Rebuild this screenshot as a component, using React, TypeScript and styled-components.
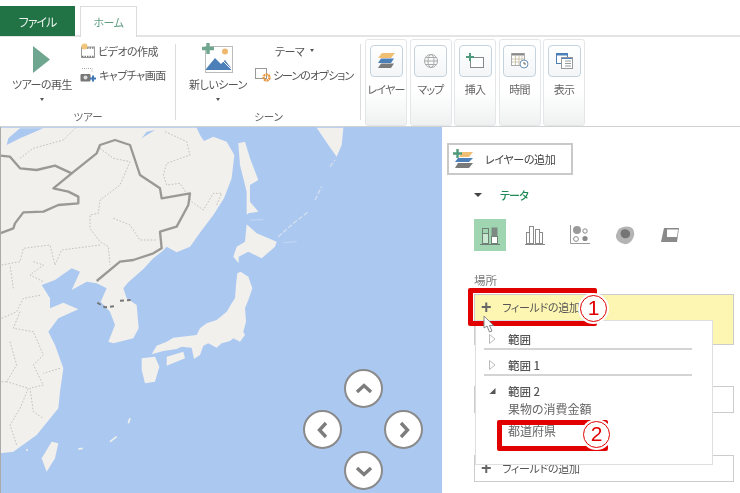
import React from "react";
import styled, { createGlobalStyle } from "styled-components";

const Global = createGlobalStyle`
  html, body { margin: 0; padding: 0; background: #fff; }
  #root { width: 740px; height: 493px; overflow: hidden; }
  * { box-sizing: border-box; }
`;

const Page = styled.div`
  width: 740px;
  height: 493px;
  display: flex;
  flex-direction: column;
  overflow: hidden;
  font-family: "Noto Sans CJK JP", "Noto Sans", sans-serif;
  font-feature-settings: "palt";
  color: #555;
  background: #fff;
  filter: blur(0.3px);
`;

const Tabs = styled.div`
  height: 37px;
  flex: none;
  padding-top: 6px;
  display: flex;
  gap: 5px;
  border-bottom: 2px solid #e4e4e4;
`;
const FileTab = styled.div`
  width: 75px;
  height: 30px;
  background: #217346;
  color: #e8f2ec;
  font-size: 12px;
  letter-spacing: -1px;
  display: flex;
  align-items: center;
  justify-content: center;
`;
const HomeTab = styled.div`
  width: 57px;
  height: 31px;
  background: #fff;
  border: 1px solid #dcdcdc;
  border-bottom: none;
  color: #5f9c82;
  font-size: 11px;
  letter-spacing: -0.5px;
  display: flex;
  align-items: center;
  justify-content: center;
`;

const Ribbon = styled.div`
  height: 90px;
  flex: none;
  display: flex;
  border-bottom: 1px solid #d2d2d2;
`;
const Group = styled.div<{ $w: number; $sep?: boolean }>`
  width: ${(p) => p.$w}px;
  height: 89px;
  flex: none;
  display: flex;
  flex-direction: column;
  align-items: stretch;
  position: relative;
  ${(p) => p.$sep && `&::after{content:"";position:absolute;right:0;top:7px;height:76px;width:1px;background:#dcdcdc;}`}
`;
const GroupBody = styled.div`
  height: 72px;
  display: flex;
  flex: none;
`;
const GroupLabel = styled.div`
  height: 17px;
  text-align: center;
  font-size: 10.5px;
  line-height: 16px;
  color: #666;
`;
const LargeButton = styled.div<{ $w: number; $ml: number }>`
  width: ${(p) => p.$w}px;
  margin-left: ${(p) => p.$ml}px;
  flex: none;
  display: flex;
  flex-direction: column;
  align-items: center;
  padding-top: 6px;
  font-size: 11px;
  letter-spacing: -0.5px;
  white-space: nowrap;
`;
const LargeIcon = styled.div`
  height: 32px;
  display: flex;
  align-items: center;
  justify-content: center;
`;
const LargeText = styled.div`
  height: 18px;
  line-height: 18px;
`;
const Caret = styled.div`
  width: 0;
  height: 0;
  margin-top: 5px;
  border-left: 2.5px solid transparent;
  border-right: 2.5px solid transparent;
  border-top: 3px solid #555;
`;
const InlineCaret = styled(Caret)`
  margin-top: 0;
`;
const SmallStack = styled.div<{ $ml: number }>`
  margin-left: ${(p) => p.$ml}px;
  padding-top: 5px;
  display: flex;
  flex-direction: column;
  gap: 7px;
`;
const SmallButton = styled.div<{ $tight?: boolean }>`
  height: 17px;
  display: flex;
  align-items: center;
  gap: 2px;
  font-size: 11px;
  letter-spacing: ${(p) => (p.$tight ? -1 : -0.5)}px;
  white-space: nowrap;
`;
const ThemeButton = styled(SmallButton)`
  padding-left: 20px;
  gap: 6px;
`;

const Cards = styled.div`
  display: flex;
  gap: 2.5px;
  padding: 2px 0 0 4px;
`;
const Card = styled.div`
  width: 42px;
  height: 87px;
  border: 1px solid #e4e7ea;
  border-radius: 3px;
  padding-top: 5px;
  background: linear-gradient(#fff 60%, #eff1f1);
  display: flex;
  flex-direction: column;
  align-items: center;
`;
const CardIcon = styled.div`
  width: 33px;
  height: 32px;
  border: 1px solid #c5d3df;
  border-radius: 4px;
  background: linear-gradient(#fff, #f3f5f7);
  display: flex;
  align-items: center;
  justify-content: center;
`;
const CardText = styled.div`
  margin-top: 4px;
  font-size: 11px;
  letter-spacing: -0.8px;
  line-height: 16px;
  color: #666;
  white-space: nowrap;
`;

const Body = styled.div`
  flex: 1;
  display: flex;
  min-height: 0;
`;
const MapPane = styled.div`
  width: 442px;
  height: 366px;
  flex: none;
  position: relative;
  background: #abc8f0;
  border-left: 1px solid #aaa;
  overflow: hidden;
`;
const MapSvg = styled.svg`
  display: block;
  width: 441px;
  height: 366px;
`;
const NavPad = styled.div`
  position: absolute;
  left: 302px;
  top: 242px;
  display: grid;
  grid-template-columns: repeat(3, 39px);
  grid-template-rows: repeat(3, 41px);
`;
const NavButton = styled.div<{ $c: number; $r: number }>`
  grid-column: ${(p) => p.$c};
  grid-row: ${(p) => p.$r};
  width: 39px;
  height: 39px;
  border-radius: 50%;
  background: #fff;
  border: 2px solid #8a8a8a;
  display: flex;
  align-items: center;
  justify-content: center;
  margin-left: ${(p) => (p.$c === 3 ? 3 : p.$c === 1 ? 0 : 2)}px;
`;

const Panel = styled.div`
  flex: 1;
  position: relative;
  overflow: hidden;
  padding: 16px 6px 0 5px;
`;
const AddLayer = styled.div`
  width: 126px;
  height: 32px;
  border: 2px solid #c9c9c9;
  display: flex;
  align-items: center;
  padding-left: 4px;
  gap: 11px;
  font-size: 11px;
  letter-spacing: -0.35px;
  color: #444;
`;
const Section = styled.div`
  padding-left: 27px;
  display: flex;
  flex-direction: column;
`;
const DataHead = styled.div`
  margin-top: 12px;
  height: 16px;
  display: flex;
  align-items: center;
  gap: 18px;
  font-size: 11px;
  letter-spacing: -0.8px;
  font-weight: 500;
  color: #1f8a55;
`;
const DownTri = styled.div`
  width: 0;
  height: 0;
  border-left: 4.5px solid transparent;
  border-right: 4.5px solid transparent;
  border-top: 4.5px solid #444;
`;
const ChartRow = styled.div`
  margin-top: 16px;
  display: flex;
  gap: 13px;
`;
const ChartBtn = styled.div<{ $on?: boolean }>`
  width: 32px;
  height: 32px;
  background: ${(p) => (p.$on ? "#a0d5b2" : "transparent")};
  display: flex;
  align-items: center;
  justify-content: center;
`;
const FieldLabel = styled.div`
  margin-top: 21px;
  font-size: 11.5px;
  line-height: 17px;
  color: #777;
`;
const Field = styled.div<{ $h: number; $mt: number; $on?: boolean }>`
  width: 260px;
  height: ${(p) => p.$h}px;
  margin-top: ${(p) => p.$mt}px;
  flex: none;
  border: 1px solid #ccc;
  background: ${(p) => (p.$on ? "#fdf6b2" : "#fff")};
  display: flex;
  align-items: flex-start;
  padding: 4px 0 0 6px;
  gap: 11px;
  font-size: 11px;
  letter-spacing: -0.3px;
  line-height: 17px;
  color: #555;
`;
const Plus = styled.span`
  font-size: 18px;
  line-height: 17px;
  font-weight: 700;
  color: #666;
  font-family: "Liberation Sans", sans-serif;
`;
const Dropdown = styled.div`
  position: absolute;
  left: 33px;
  top: 193px;
  width: 238px;
  height: 145px;
  background: #fff;
  border: 1px solid #dedede;
  padding: 9px 20px 0 8px;
  font-size: 11.5px;
  color: #555;
`;
const TreeRow = styled.div<{ $line?: boolean }>`
  height: ${(p) => (p.$line ? 20 : 18)}px;
  display: flex;
  align-items: center;
  gap: 12px;
  padding-left: 5px;
  font-weight: 500;
  line-height: 17px;
  color: #555;
  border-bottom: ${(p) => (p.$line ? "2px solid #d4d4d4" : "none")};
  margin-bottom: ${(p) => (p.$line ? 6 : 0)}px;
`;
const TreeLeaf = styled.div<{ $mt: number }>`
  margin: ${(p) => p.$mt}px 0 0 24px;
  line-height: 17px;
  color: #666;
  font-size: 12px;
`;
const RedBox = styled.div<{ $l: number; $t: number; $w: number; $h: number }>`
  position: absolute;
  left: ${(p) => p.$l}px;
  top: ${(p) => p.$t}px;
  width: ${(p) => p.$w}px;
  height: ${(p) => p.$h}px;
  border: 5px solid #e00000;
  border-radius: 2px;
`;
const Badge = styled.div<{ $l: number; $t: number }>`
  position: absolute;
  left: ${(p) => p.$l}px;
  top: ${(p) => p.$t}px;
  width: 31px;
  height: 31px;
  border-radius: 50%;
  background: #fff;
  display: flex;
  align-items: center;
  justify-content: center;
`;
const BadgeInner = styled.div`
  width: 27px;
  height: 27px;
  border-radius: 50%;
  border: 1.5px solid #e00000;
  color: #e00000;
  font-size: 21px;
  line-height: 24px;
  text-align: center;
  font-family: "Liberation Sans", sans-serif;
`;
const Cursor = styled.svg`
  position: absolute;
  left: 41px;
  top: 188px;
`;

const mainland =
  "M590 8 L600 30 L612 48 L640 35 L680 50 L703 90 L695 160 L672 220 L640 270 L602 320 L570 365 L530 382 L500 365 L488 378 L460 400 L430 432 L385 472 L370 490 L380 520 L410 540 L416 610 L400 640 L340 655 L325 650 L345 600 L330 560 L302 530 L320 490 L290 475 L260 470 L215 495 L240 440 L215 430 L165 465 L125 480 L150 520 L150 550 L190 533 L235 553 L175 580 L145 620 L165 660 L190 730 L180 800 L175 850 L110 930 L40 980 L0 985 L0 8 Z";
const honshu =
  "M712 445 L722 440 L745 455 L757 490 L745 525 L735 550 L738 590 L730 620 L735 630 L720 650 L700 640 L690 648 L665 655 L650 668 L625 655 L610 662 L600 690 L582 702 L575 668 L545 665 L530 672 L490 678 L455 688 L470 662 L500 650 L520 638 L590 630 L600 610 L620 595 L650 585 L680 560 L695 535 L705 520 L708 480 Z";

const MapArt = () => (
  <MapSvg viewBox="3 6 1323 1098">
    <defs>
      <filter id="soft"><feGaussianBlur stdDeviation="1.4" /></filter>
    </defs>
    <g filter="url(#soft)">
      <path d={mainland} fill="#f1f0ed" />
      <path d="M715 55 L735 50 L750 100 L775 165 L750 180 L750 230 L775 260 L745 265 L740 270 L740 200 L720 120 Z" fill="#f1f0ed" />
      <path d="M950 8 L1030 8 L1025 60 L1010 95 L985 60 Z" fill="#f1f0ed" />
      <path d="M740 298 L770 325 L830 350 L825 365 L785 400 L745 380 L716 395 L716 415 L700 395 L710 365 L735 350 Z" fill="#f1f0ed" />
      <path d={honshu} fill="#f1f0ed" />
      <path d="M425 700 L465 695 L478 725 L465 770 L435 775 L425 735 Z" fill="#f1f0ed" />
      <path d="M500 695 L550 680 L555 700 L500 722 Z" fill="#f1f0ed" />
      <path d="M155 950 L175 955 L165 1000 L140 1040 L125 1000 Z" fill="#f1f0ed" />
      <path d="M835 335 L880 295 L925 260 M945 225 L965 185 M990 125 L1005 105" stroke="#d4dfee" strokeWidth="4" strokeDasharray="14 6" fill="none" />
      <path d="M750 285 L790 284 M850 353 L890 350" stroke="#c4d7f2" strokeWidth="3" fill="none" />
      <path d="M385 895 L390 880 M330 950 L350 935 M235 972 L248 970 M78 975 L84 975" stroke="#f1f0ed" strokeWidth="5" fill="none" />
      <path d="M20 60 L60 40 L130 10 L60 10 L25 40 Z M425 40 L465 15 L440 20 Z" fill="#abc8f0" />
      <g fill="none" stroke="#b9b8b4" strokeWidth="2.5" strokeDasharray="5 5">
        <path d="M60 100 L100 70 L190 45 L225 10 M300 70 L340 100 L390 110 L360 180 L300 225 L295 265 L270 270 L270 310 L300 350 L325 365 L330 420" />
        <path d="M340 280 L390 300 L420 345 L470 345 M495 20 L560 50 L570 90 L500 115 L490 150 L500 180 L540 175 L575 230 L610 255 L640 205 L665 205 L650 240" />
        <path d="M5 420 L60 410 L70 370 L150 360 L165 420 L185 375 L300 360 M100 410 L130 420 L90 450 L130 470" />
        <path d="M5 580 L50 560 L70 520 L125 510 M40 490 L30 420 M60 560 L40 610 L100 620 L130 690 L100 720 L130 780 L90 790 L100 860 L130 880 M30 650 L50 720 L20 770 L85 790 L60 850 L30 900 L50 960 M5 770 L20 770 M180 730 L130 745" />
      </g>
      <g fill="none" stroke="#9a9996" strokeWidth="7" strokeLinejoin="round">
        <path d="M0 92 L30 95 L60 130 L110 135 L165 122 L215 145 L290 85 L300 60 L345 45 L390 60 L420 150 L480 190 L485 220 L570 205 L565 240 L530 305 L480 320 L485 370 L460 385 L400 405 L360 410 L290 468" />
        <path d="M215 145 L160 190 L205 200 L235 215 L235 235 L175 240 L130 260 L70 262 L45 295 L40 310 L0 325" />
      </g>
      <path d="M292 533 L315 547 L350 543 M360 527 L392 525" fill="none" stroke="#777" strokeWidth="6" strokeDasharray="12 9" />
    </g>
  </MapSvg>
);

const Chev = ({ d }: { d: string }) => (
  <svg width="20" height="20" viewBox="0 0 20 20">
    <path d={d} fill="none" stroke="#7d7d7d" strokeWidth="3.4" />
  </svg>
);

const PlayIcon = () => (
  <svg width="18" height="27" viewBox="0 0 18 27"><path d="M0 0 L17 13.5 L0 27 Z" fill="#6fa68f" /></svg>
);
const VideoIcon = () => (
  <svg width="16" height="16" viewBox="0 0 16 16">
    <rect x="1.5" y="4" width="13" height="10.5" fill="#fff" stroke="#999" />
    <path d="M2 13.5 h12 M2 5 h12" stroke="#777" strokeWidth="1.4" strokeDasharray="1.5 1" />
    <circle cx="4.5" cy="3.5" r="3" fill="#f3c57c" />
  </svg>
);
const CaptureIcon = () => (
  <svg width="17" height="16" viewBox="0 0 17 16">
    <path d="M2 1.5 h10 v4" fill="none" stroke="#aaa" strokeDasharray="1 1" />
    <rect x="0.5" y="7" width="10" height="7.5" rx="1" fill="#777" />
    <circle cx="5.5" cy="10.5" r="2" fill="#ddd" />
    <path d="M13 8.5 v6 M10 11.5 h6" stroke="#3f78b8" strokeWidth="2" />
  </svg>
);
const SceneIcon = () => (
  <svg width="32" height="32" viewBox="0 0 32 32">
    <rect x="3.5" y="3.5" width="27" height="26" fill="#fff" stroke="#bbb" />
    <path d="M4 26 L13 15 L19 21 L23 17 L29 25 L29 27 L4 27 Z" fill="#4d7fb8" />
    <path d="M19 16 L29 26" stroke="#fff" strokeWidth="1" />
    <circle cx="23" cy="8.5" r="3" fill="#eeb86e" />
    <path d="M6 0 v11 M0 5.5 h12" stroke="#6fa68f" strokeWidth="3.4" />
  </svg>
);
const OptionsIcon = () => (
  <svg width="16" height="15" viewBox="0 0 16 15">
    <rect x="0.5" y="1.5" width="11" height="10" fill="#fff" stroke="#999" />
    <circle cx="11.5" cy="10.5" r="3" fill="none" stroke="#e8963c" strokeWidth="2.4" strokeDasharray="2 0.6" />
  </svg>
);
const LayersIcon = () => (
  <svg width="20" height="18" viewBox="0 0 20 18">
    <path d="M6 1 H19 L15 6 H2 Z" fill="#f0bf74" />
    <path d="M5 6.5 H18 L15 11 H2 Z" fill="#4d7fb8" />
    <path d="M5 11.5 H18 L15 16 H2 Z" fill="#7a7a7a" />
  </svg>
);
const GlobeIcon = () => (
  <svg width="16" height="16" viewBox="0 0 16 16" fill="none" stroke="#aaa">
    <circle cx="8" cy="8" r="6.5" />
    <ellipse cx="8" cy="8" rx="3" ry="6.5" />
    <path d="M1.5 8 h13 M2.5 4.5 h11 M2.5 11.5 h11" />
  </svg>
);
const InsertIcon = () => (
  <svg width="18" height="16" viewBox="0 0 18 16">
    <rect x="4.5" y="4.5" width="13" height="10" fill="#fff" stroke="#888" />
    <path d="M4 0 v8 M0 4 h8" stroke="#4f9a7a" strokeWidth="2" />
  </svg>
);
const TimeIcon = () => (
  <svg width="18" height="16" viewBox="0 0 18 16">
    <rect x="0.5" y="0.5" width="13" height="12" fill="#fff" stroke="#aaa" />
    <path d="M1 1.5 h12" stroke="#888" strokeWidth="2" />
    <path d="M1 6 h12 M1 9 h12 M4.5 3 v9 M8 3 v9 M11 3 v9" stroke="#cfc6ae" />
    <circle cx="13" cy="11" r="4" fill="#fff" stroke="#6f93b8" />
    <path d="M13 9 v2 h2" stroke="#666" fill="none" />
  </svg>
);
const ViewIcon = () => (
  <svg width="17" height="16" viewBox="0 0 17 16">
    <rect x="0.5" y="0.5" width="11" height="10" fill="#fff" stroke="#4d7fb8" />
    <path d="M1 1.5 h10" stroke="#4d7fb8" strokeWidth="2" />
    <rect x="5.5" y="4.5" width="11" height="11" fill="#fff" stroke="#999" />
    <path d="M6 5.5 h10" stroke="#4d7fb8" />
    <path d="M9 8 h6 M9 10.5 h6 M9 13 h6" stroke="#999" />
  </svg>
);
const AddLayerIcon = () => (
  <svg width="21" height="21" viewBox="0 0 21 21">
    <path d="M9 3 H20 L16 8 H6 Z" fill="#f0bf74" />
    <path d="M5 9 H20 L16 13 H2 Z" fill="#4d7fb8" />
    <path d="M5 14 H20 L16 19 H2 Z" fill="#7a7a7a" />
    <path d="M4.5 0 v9 M0 4.5 h9" stroke="#4f9a7a" strokeWidth="2.4" />
  </svg>
);
const StackedIcon = () => (
  <svg width="20" height="20" viewBox="0 0 20 20">
    <rect x="2.5" y="8.5" width="6" height="10" fill="#c8e8d2" stroke="#6f7f76" />
    <rect x="2.5" y="3.5" width="6" height="5" fill="#a0d5b2" stroke="#6f7f76" />
    <rect x="11.5" y="11.5" width="6" height="7" fill="#fff" stroke="#6f7f76" />
    <rect x="11.5" y="2.5" width="6" height="9" fill="#7d8a82" />
    <path d="M0 19.5 h20" stroke="#6f7f76" />
  </svg>
);
const ClusterIcon = () => (
  <svg width="20" height="20" viewBox="0 0 20 20" fill="none" stroke="#8a8a8a">
    <rect x="1.5" y="7.5" width="3" height="11" />
    <rect x="4.5" y="1.5" width="4" height="17" />
    <rect x="10.5" y="4.5" width="4" height="14" />
    <rect x="14.5" y="7.5" width="3" height="11" />
    <path d="M0 19.5 h20" />
  </svg>
);
const BubbleIcon = () => (
  <svg width="20" height="20" viewBox="0 0 20 20">
    <path d="M0.5 0 V18.5 H20" fill="none" stroke="#999" />
    <circle cx="7" cy="5" r="4" fill="#9a9a9a" />
    <circle cx="15" cy="6" r="2.2" fill="none" stroke="#888" />
    <circle cx="6" cy="14" r="2.4" fill="none" stroke="#888" />
    <circle cx="15" cy="13.5" r="2.6" fill="#8a8a8a" />
  </svg>
);
const HeatIcon = () => (
  <svg width="20" height="20" viewBox="0 0 20 20">
    <path d="M3 5 C6 1 15 0 18 4 C21 9 18 17 12 19 C6 20 0 15 1 10 Z" fill="#b4b4b4" />
    <path d="M7 5 C10 3 16 5 15 10 C14 14 9 14 7 12 C5 10 5 7 7 5 Z" fill="#757575" />
  </svg>
);
const RegionIcon = () => (
  <svg width="20" height="16" viewBox="0 0 20 16">
    <path d="M4 1 H19 L17 15 H1 Z" fill="#8a8a8a" />
    <path d="M7 2.5 H18 L17 10 H7 Z" fill="#fff" />
  </svg>
);

const Closed = () => (
  <svg width="7" height="10" viewBox="0 0 7 10"><path d="M0.5 0.5 L6 5 L0.5 9.5 Z" fill="#fff" stroke="#bbb" /></svg>
);

export default function App() {
  return (
    <Page>
      <Global />
      <Tabs>
        <FileTab>ファイル</FileTab>
        <HomeTab>ホーム</HomeTab>
      </Tabs>
      <Ribbon>
        <Group $w={176} $sep>
          <GroupBody>
            <LargeButton $w={64} $ml={10}>
              <LargeIcon><PlayIcon /></LargeIcon>
              <LargeText>ツアーの再生</LargeText>
              <Caret />
            </LargeButton>
            <SmallStack $ml={6}>
              <SmallButton><VideoIcon />ビデオの作成</SmallButton>
              <SmallButton><CaptureIcon />キャプチャ画面</SmallButton>
            </SmallStack>
          </GroupBody>
          <GroupLabel>ツアー</GroupLabel>
        </Group>
        <Group $w={185} $sep>
          <GroupBody>
            <LargeButton $w={62} $ml={11}>
              <LargeIcon><SceneIcon /></LargeIcon>
              <LargeText>新しいシーン</LargeText>
              <Caret />
            </LargeButton>
            <SmallStack $ml={6}>
              <ThemeButton>テーマ<InlineCaret /></ThemeButton>
              <SmallButton $tight><OptionsIcon />シーンのオプション</SmallButton>
            </SmallStack>
          </GroupBody>
          <GroupLabel>シーン</GroupLabel>
        </Group>
        <Cards>
          <Card><CardIcon><LayersIcon /></CardIcon><CardText>レイヤー</CardText></Card>
          <Card><CardIcon><GlobeIcon /></CardIcon><CardText>マップ</CardText></Card>
          <Card><CardIcon><InsertIcon /></CardIcon><CardText>挿入</CardText></Card>
          <Card><CardIcon><TimeIcon /></CardIcon><CardText>時間</CardText></Card>
          <Card><CardIcon><ViewIcon /></CardIcon><CardText>表示</CardText></Card>
        </Cards>
      </Ribbon>
      <Body>
        <MapPane>
          <MapArt />
          <NavPad>
            <NavButton $c={2} $r={1}><Chev d="M3 13 L10 6.5 L17 13" /></NavButton>
            <NavButton $c={1} $r={2}><Chev d="M13 3 L6.5 10 L13 17" /></NavButton>
            <NavButton $c={3} $r={2}><Chev d="M7 3 L13.5 10 L7 17" /></NavButton>
            <NavButton $c={2} $r={3}><Chev d="M3 7 L10 13.5 L17 7" /></NavButton>
          </NavPad>
        </MapPane>
        <Panel>
          <AddLayer><AddLayerIcon />レイヤーの追加</AddLayer>
          <Section>
            <DataHead><DownTri />テータ</DataHead>
            <ChartRow>
              <ChartBtn $on><StackedIcon /></ChartBtn>
              <ChartBtn><ClusterIcon /></ChartBtn>
              <ChartBtn><BubbleIcon /></ChartBtn>
              <ChartBtn><HeatIcon /></ChartBtn>
              <ChartBtn><RegionIcon /></ChartBtn>
            </ChartRow>
            <FieldLabel>場所</FieldLabel>
            <Field $h={51} $mt={5} $on><Plus>+</Plus>フィールドの追加</Field>
            <Field $h={27} $mt={41} />
            <Field $h={27} $mt={42}><Plus>+</Plus>フィールドの追加</Field>
          </Section>
          <Dropdown>
            <TreeRow $line><Closed />範囲</TreeRow>
            <TreeRow $line><Closed />範囲 1</TreeRow>
            <TreeRow>
              <svg width="7" height="10" viewBox="0 0 7 10"><path d="M6.5 2 V8 H0.5 Z" fill="#555" /></svg>
              範囲 2
            </TreeRow>
            <TreeLeaf $mt={0}>果物の消費金額</TreeLeaf>
            <TreeLeaf $mt={5}>都道府県</TreeLeaf>
          </Dropdown>
          <RedBox $l={26} $t={161} $w={129} $h={38} />
          <RedBox $l={55} $t={293} $w={111} $h={31} />
          <Badge $l={136} $t={166}><BadgeInner>1</BadgeInner></Badge>
          <Badge $l={139} $t={292}><BadgeInner>2</BadgeInner></Badge>
          <Cursor width="12" height="18" viewBox="0 0 12 18">
            <path d="M1 1 L1 13 L4 11 L6.5 17 L9 16 L6.5 10.5 L10.5 10.5 Z" fill="#fff" stroke="#888" />
          </Cursor>
        </Panel>
      </Body>
    </Page>
  );
}
